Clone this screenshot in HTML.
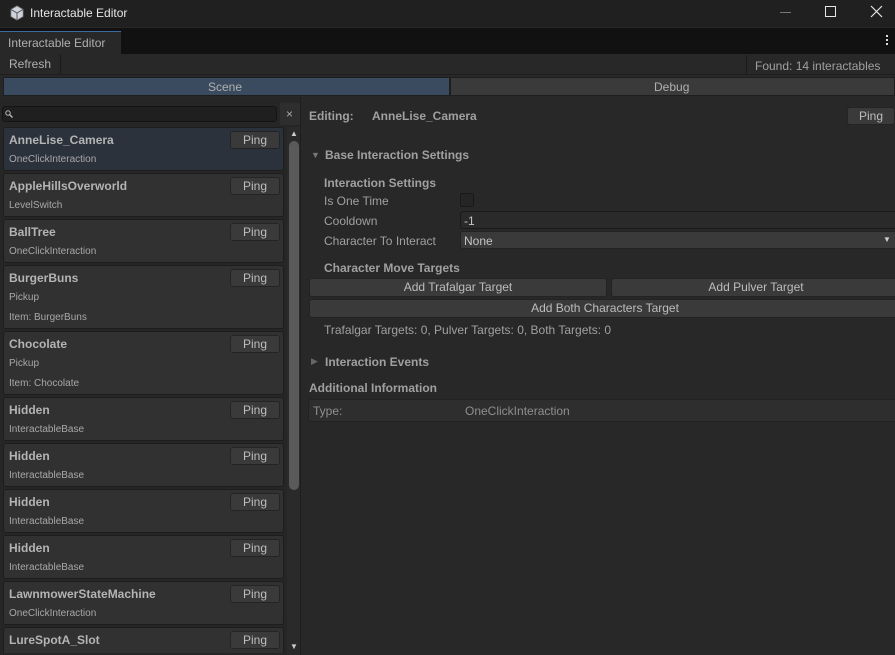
<!DOCTYPE html>
<html style="width:895px;height:655px;overflow:hidden"><head><meta charset="utf-8"><style>
*{box-sizing:border-box;margin:0;padding:0}
body{width:895px;height:655px;overflow:hidden;background:#282828;font-family:"Liberation Sans",sans-serif;color:#c4c4c4;position:relative;font-size:12px}
.a{position:absolute}
.item{position:absolute;left:3px;width:281px;background:#313131;border:1px solid #1d1d1d;border-radius:3px}
.item .n{position:absolute;left:5px;top:5px;font-weight:bold;font-size:12px;color:#b4b4b4}
.item .s{position:absolute;left:5px;font-size:10px;color:#a8a8a8}
.ping{position:absolute;background:#3a3a3a;border:1px solid #242424;border-radius:3px;color:#bdbdbd;text-align:center;font-size:12px;line-height:16px}
.item .ping{left:226px;top:3px;width:50px;height:18px}
.lbl{position:absolute;font-size:12px;color:#a0a0a0}
.btn{position:absolute;background:#3a3a3a;border:1px solid #232323;border-radius:3px;text-align:center;font-size:12px;color:#bdbdbd;line-height:17px;height:19px}
</style></head><body>
<div class="a" style="left:0;top:0;width:895px;height:27px;background:#202020"></div>
<svg class="a" style="left:9px;top:5px" width="16" height="16" viewBox="0 0 16 16"><path d="M8 1L14 4.5V11.5L8 15L2 11.5V4.5Z" fill="#cfd3dc" stroke="#888" stroke-width=".8"/><path d="M2 4.5L8 8L14 4.5M8 8V15" stroke="#555" fill="none"/></svg>
<div class="a" style="left:30px;top:6px;font-size:12px;color:#e6e6e6">Interactable Editor</div>
<div class="a" style="left:780px;top:12px;width:11px;height:1px;background:#777"></div>
<div class="a" style="left:825px;top:6px;width:11px;height:11px;border:1px solid #e6e6e6"></div>
<svg class="a" style="left:870px;top:5px" width="13" height="13"><path d="M1 1L12 12M12 1L1 12" stroke="#e6e6e6" stroke-width="1.2"/></svg>
<div class="a" style="left:0;top:28px;width:895px;height:26px;background:#111"></div>
<div class="a" style="left:0;top:31px;width:121px;height:23px;background:#282828;border-top:1px solid #3d6ba0"></div>
<div class="a" style="left:8px;top:36px;font-size:12px;color:#b0b0b0">Interactable Editor</div>
<div class="a" style="left:886px;top:35px;width:2px;height:10px;border-left:2px dotted #ddd"></div>
<div class="a" style="left:0;top:54px;width:895px;height:21px;background:#282828;border-bottom:1px solid #1e1e1e"></div>
<div class="a" style="left:60px;top:54px;width:1px;height:20px;background:#1a1a1a"></div>
<div class="a" style="left:746px;top:55px;width:1px;height:19px;background:#1a1a1a"></div>
<div class="a" style="left:9px;top:57px;color:#b0b0b0">Refresh</div>
<div class="a" style="left:755px;top:59px;color:#a0a0a0">Found: 14 interactables</div>
<div class="a" style="left:3px;top:77px;width:447px;height:19px;background:#3a4a5f;border:1px solid #1e1e1e"></div>
<div class="a" style="left:450px;top:77px;width:445px;height:19px;background:#3a3a3a;border:1px solid #1e1e1e"></div>
<div class="a" style="left:208px;top:80px;color:#b0b0b0">Scene</div>
<div class="a" style="left:654px;top:80px;color:#b0b0b0">Debug</div>
<div class="a" style="left:0;top:97px;width:300px;height:558px;background:#262626"></div>
<div class="a" style="left:2px;top:106px;width:275px;height:16px;background:#1f1f1f;border:1px solid #141414;border-radius:3px"></div>
<svg class="a" style="left:5px;top:110px" width="8" height="8"><circle cx="3" cy="3" r="2.2" stroke="#bbb" fill="none"/><path d="M4.5 4.5L7.5 7.5" stroke="#bbb" stroke-width="1.3"/></svg>
<div class="a" style="left:280px;top:103px;width:20px;height:22px;background:#2e2e2e"></div>
<div class="a" style="left:286px;top:107px;color:#aaa;font-size:12px">×</div>

<div class="item" style="top:127px;height:44px;background:#2c323c"><div class="n">AnneLise_Camera</div><div class="s" style="top:26px">OneClickInteraction</div><div class="ping">Ping</div></div>
<div class="item" style="top:173px;height:44px"><div class="n">AppleHillsOverworld</div><div class="s" style="top:26px">LevelSwitch</div><div class="ping">Ping</div></div>
<div class="item" style="top:219px;height:44px"><div class="n">BallTree</div><div class="s" style="top:26px">OneClickInteraction</div><div class="ping">Ping</div></div>
<div class="item" style="top:265px;height:64px"><div class="n">BurgerBuns</div><div class="s" style="top:26px">Pickup</div><div class="s" style="top:46px">Item: BurgerBuns</div><div class="ping">Ping</div></div>
<div class="item" style="top:331px;height:64px"><div class="n">Chocolate</div><div class="s" style="top:26px">Pickup</div><div class="s" style="top:46px">Item: Chocolate</div><div class="ping">Ping</div></div>
<div class="item" style="top:397px;height:44px"><div class="n">Hidden</div><div class="s" style="top:26px">InteractableBase</div><div class="ping">Ping</div></div>
<div class="item" style="top:443px;height:44px"><div class="n">Hidden</div><div class="s" style="top:26px">InteractableBase</div><div class="ping">Ping</div></div>
<div class="item" style="top:489px;height:44px"><div class="n">Hidden</div><div class="s" style="top:26px">InteractableBase</div><div class="ping">Ping</div></div>
<div class="item" style="top:535px;height:44px"><div class="n">Hidden</div><div class="s" style="top:26px">InteractableBase</div><div class="ping">Ping</div></div>
<div class="item" style="top:581px;height:44px"><div class="n">LawnmowerStateMachine</div><div class="s" style="top:26px">OneClickInteraction</div><div class="ping">Ping</div></div>
<div class="item" style="top:627px;height:26px;border-bottom:none;border-radius:3px 3px 0 0"><div class="n">LureSpotA_Slot</div><div class="ping">Ping</div></div>

<div class="a" style="left:287px;top:127px;width:13px;height:528px;background:#2a2a2a"></div>
<div class="a" style="left:289px;top:141px;width:10px;height:349px;background:#5a5a5a;border-radius:5px"></div>
<div class="a" style="left:290px;top:129px;font-size:8px;color:#ccc">▲</div>
<div class="a" style="left:290px;top:642px;font-size:8px;color:#ccc">▼</div>
<div class="a" style="left:300px;top:97px;width:1px;height:558px;background:#1e1e1e"></div>

<div class="lbl" style="left:309px;top:109px;font-weight:bold">Editing:</div>
<div class="lbl" style="left:372px;top:109px;font-weight:bold">AnneLise_Camera</div>
<div class="ping" style="left:847px;top:107px;width:48px;height:18px">Ping</div>
<div class="lbl" style="left:311px;top:150px;font-size:9px;color:#777">▼</div>
<div class="lbl" style="left:325px;top:148px;font-weight:bold">Base Interaction Settings</div>
<div class="lbl" style="left:324px;top:176px;font-weight:bold">Interaction Settings</div>
<div class="lbl" style="left:324px;top:194px">Is One Time</div>
<div class="a" style="left:460px;top:193px;width:14px;height:14px;background:#252525;border:1px solid #1a1a1a;border-radius:2px"></div>
<div class="lbl" style="left:324px;top:214px">Cooldown</div>
<div class="a" style="left:460px;top:211px;width:440px;height:18px;background:#2a2a2a;border:1px solid #1a1a1a;border-radius:3px"></div>
<div class="lbl" style="left:464px;top:214px;color:#c4c4c4">-1</div>
<div class="lbl" style="left:324px;top:234px">Character To Interact</div>
<div class="a" style="left:460px;top:231px;width:440px;height:18px;background:#3a3a3a;border:1px solid #222;border-radius:3px"></div>
<div class="lbl" style="left:464px;top:234px;color:#c4c4c4">None</div>
<div class="lbl" style="left:883px;top:235px;font-size:8px;color:#ccc">▼</div>
<div class="lbl" style="left:324px;top:261px;font-weight:bold">Character Move Targets</div>
<div class="btn" style="left:309px;top:278px;width:298px">Add Trafalgar Target</div>
<div class="btn" style="left:611px;top:278px;width:290px">Add Pulver Target</div>
<div class="btn" style="left:309px;top:299px;width:592px">Add Both Characters Target</div>
<div class="lbl" style="left:324px;top:323px">Trafalgar Targets: 0, Pulver Targets: 0, Both Targets: 0</div>
<div class="lbl" style="left:311px;top:356px;font-size:9px;color:#666">▶</div>
<div class="lbl" style="left:325px;top:355px;font-weight:bold">Interaction Events</div>
<div class="lbl" style="left:309px;top:381px;font-weight:bold">Additional Information</div>
<div class="a" style="left:308px;top:399px;width:600px;height:23px;background:#2e2e2e;border:1px solid #222;border-radius:3px"></div>
<div class="lbl" style="left:313px;top:404px;color:#8f8f8f">Type:</div>
<div class="lbl" style="left:465px;top:404px;color:#8f8f8f">OneClickInteraction</div>
</body></html>
